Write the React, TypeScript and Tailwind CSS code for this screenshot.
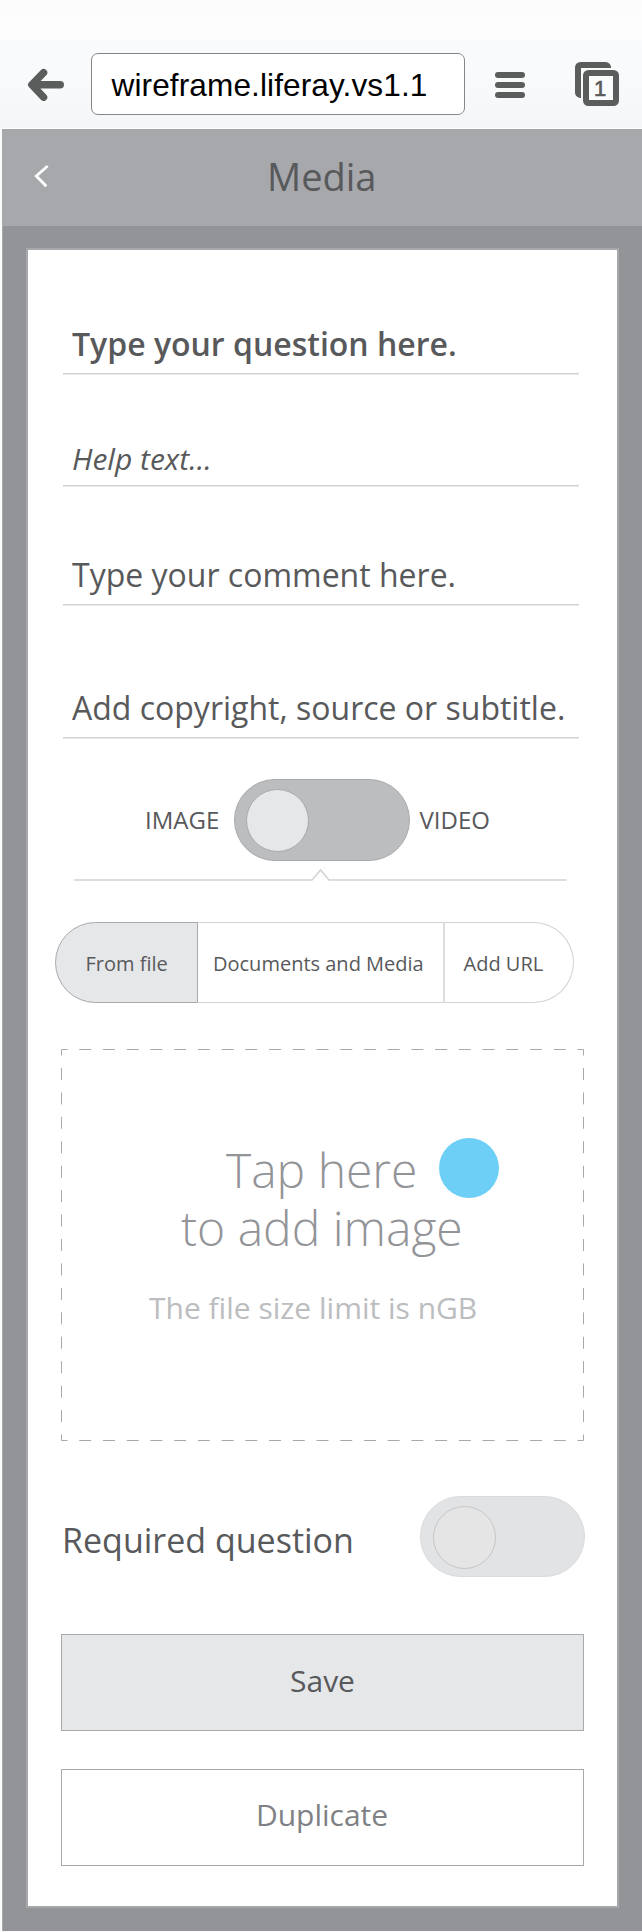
import type { ReactNode } from "react";

function BrowserBar() {
  return (
    <div className="flex h-[129px] items-start border-b border-white bg-[linear-gradient(#fbfcfb_0px,#fcfdfc_39px,#f8fafc_41px,#f8fafc_75px,#f5f6f8_128px)] pt-[53px]">
      <svg className="ml-[26px] h-[62px] w-10 shrink-0" viewBox="26 53 40 62" fill="none" stroke="#5b5d5c" strokeWidth="7.4" strokeLinecap="round" strokeLinejoin="round">
        <path d="M43.6 72.7 31.8 84.8 43.6 97.2M32 84.8H60.3" />
      </svg>
      <div className="ml-[25px] h-[62px] w-[374px] shrink-0 rounded-[7px] border border-[#858688] bg-white pt-px pl-[19.5px] font-['Liberation_Sans',sans-serif] text-[31.6px] leading-[60px] tracking-[0.1px] whitespace-nowrap text-black">
        wireframe.liferay.vs1.1
      </div>
      <div className="mt-[19px] ml-[30px] flex w-[30px] flex-col gap-1">
        <span className="h-1.5 rounded-full bg-[#5b5d5c]" />
        <span className="h-1.5 rounded-full bg-[#5b5d5c]" />
        <span className="h-1.5 rounded-full bg-[#5b5d5c]" />
      </div>
      <svg className="mt-[9px] ml-[50px] h-11 w-11" viewBox="0 0 44 44">
        <path d="M0 5.5A5.5 5.5 0 0 1 5.5 0H30.5A5.5 5.5 0 0 1 36 6H6V36A5.5 5.5 0 0 1 0 30.5Z" fill="#5b5d5c" />
        <rect x="11" y="11" width="30" height="30" rx="2.5" fill="#fafbfc" stroke="#5b5d5c" strokeWidth="6" />
        <text x="25" y="34" textAnchor="middle" fontFamily="Liberation Sans, sans-serif" fontSize="22" fill="#5b5d5c" stroke="#5b5d5c" strokeWidth="0.7">1</text>
      </svg>
    </div>
  );
}

function Field({ className, children }: { className: string; children: ReactNode }) {
  return (
    <div className={`flex items-end border-b border-[#d0d2d3] pl-[9px] leading-10 whitespace-nowrap shadow-[0_1px_0_#e9eaea] ${className}`}>
      {children}
    </div>
  );
}

function DashedFrame() {
  return (
    <svg className="absolute inset-0 h-full w-full" viewBox="61 1049 524 392" fill="none" stroke="#a7a9ac" strokeWidth="1">
      <path d="M61.5 1049.5H583.5M61.5 1440.5H583.5" strokeDasharray="12 11.727" strokeDashoffset="6" />
      <path d="M61.5 1049.5V1440.5M583.5 1049.5V1440.5" strokeDasharray="12 12.4375" strokeDashoffset="6" />
    </svg>
  );
}

export default function App() {
  return (
    <div className="h-[1932px] w-[642px] overflow-hidden bg-[#fbfbfb] pl-[2px] font-['Open_Sans',sans-serif] text-[#58595b]">
      <div className="-ml-[2px]">
        <BrowserBar />
      </div>
      <div className="h-[1802px] border-l border-[#a7a9ac] bg-[#939498]">
        <header className="-ml-px flex h-[97px] bg-[#a7a8ac]">
          <svg className="mt-[34px] ml-8 h-[26px] w-4" viewBox="34 163 16 26" fill="none" stroke="#fff" strokeWidth="2.8">
            <path d="M47.6 166 36.3 176 46.3 186.3" />
          </svg>
          <h1 className="ml-[217px] text-[38px] leading-[94px]">Media</h1>
        </header>

        <main className="mt-[22px] ml-[23px] h-[1660px] w-[593px] border-2 border-[#a7a8ac] bg-white">
          <div className="mr-[38px] ml-[35px]">
            <Field className="h-[124px] pb-[9px] text-[32px] font-semibold">Type your question here.</Field>
            <Field className="h-[112px] pb-[6px] text-[30px] italic">Help text...</Field>
            <Field className="h-[119px] pb-[9px] text-[32px]">Type your comment here.</Field>
            <Field className="h-[133px] pb-[9px] text-[32px]">Add copyright, source or subtitle.</Field>
          </div>

          <div className="mt-[41px] flex h-[82px] items-center pl-[117px] text-[24px]">
            <span className="w-[89px]">IMAGE</span>
            <div className="flex h-[82px] w-[176px] items-center rounded-full border border-[#a7a9ac] bg-[#bbbdbf] pl-[10.5px]">
              <div className="h-[63px] w-[63px] rounded-full border border-[#a7a9ac] bg-[#e6e7e9]" />
            </div>
            <span className="pl-[9.5px]">VIDEO</span>
          </div>

          <svg className="mt-[6px] ml-[46px] h-4 w-[493px]" viewBox="74 867 493 16" fill="none" stroke="#d1d3d4" strokeWidth="1.5">
            <path d="M74 880H312L320.6 870 329 880H566.5" />
          </svg>

          <div className="mt-[39px] ml-[26.5px] flex h-[81px] w-[519px] text-[20px] leading-[81px] whitespace-nowrap">
            <div className="w-[143px] rounded-l-full border border-[#a7a9ac] bg-[#e6e7e9] pl-[30px]">From file</div>
            <div className="w-[247.5px] border-y border-r-2 border-[#d1d3d4] border-r-[#dcddde] pl-[15.5px]">Documents and Media</div>
            <div className="w-[128.5px] rounded-r-full border-y border-r border-[#d1d3d4] pl-[18.5px]">Add URL</div>
          </div>

          <div className="relative mt-[46px] ml-[33px] h-[392px] w-[524px] pt-[92px]">
            <DashedFrame />
            <div className="text-[48px] leading-[58px] font-light whitespace-nowrap text-[#939498]">
              <div className="pl-[165px]">Tap here</div>
              <div className="pl-[120px]">to add image</div>
            </div>
            <div className="mt-[31px] pl-[88px] text-[30px] leading-10 whitespace-nowrap text-[#bbbdbf]">The file size limit is nGB</div>
            <div className="absolute top-[89px] left-[378px] h-[60px] w-[60px] rounded-full bg-[#6dcff6]" />
          </div>

          <div className="mt-[55px] ml-[33px] flex h-[81px] w-[523.5px] justify-between">
            <span className="pt-[4px] pl-px text-[34px] leading-[80px]">Required question</span>
            <div className="flex h-[81px] w-[164.5px] items-center rounded-full border border-[#d9dadb] bg-[#e2e3e5] pl-3">
              <div className="mt-px h-[63px] w-[63px] rounded-full border border-[#c4c6c8] bg-[#e5e5e5]" />
            </div>
          </div>

          <button className="mt-[57px] ml-[33px] flex h-[97px] w-[523px] items-center justify-center border border-[#a7a9ac] bg-[#e6e7e9] pb-[4px] text-[30px]">
            Save
          </button>
          <button className="mt-[38px] ml-[33px] flex h-[97px] w-[523px] items-center justify-center border border-[#a7a9ac] bg-white pr-px pb-[7px] text-[30px] text-[#808184]">
            Duplicate
          </button>
        </main>
      </div>
    </div>
  );
}
